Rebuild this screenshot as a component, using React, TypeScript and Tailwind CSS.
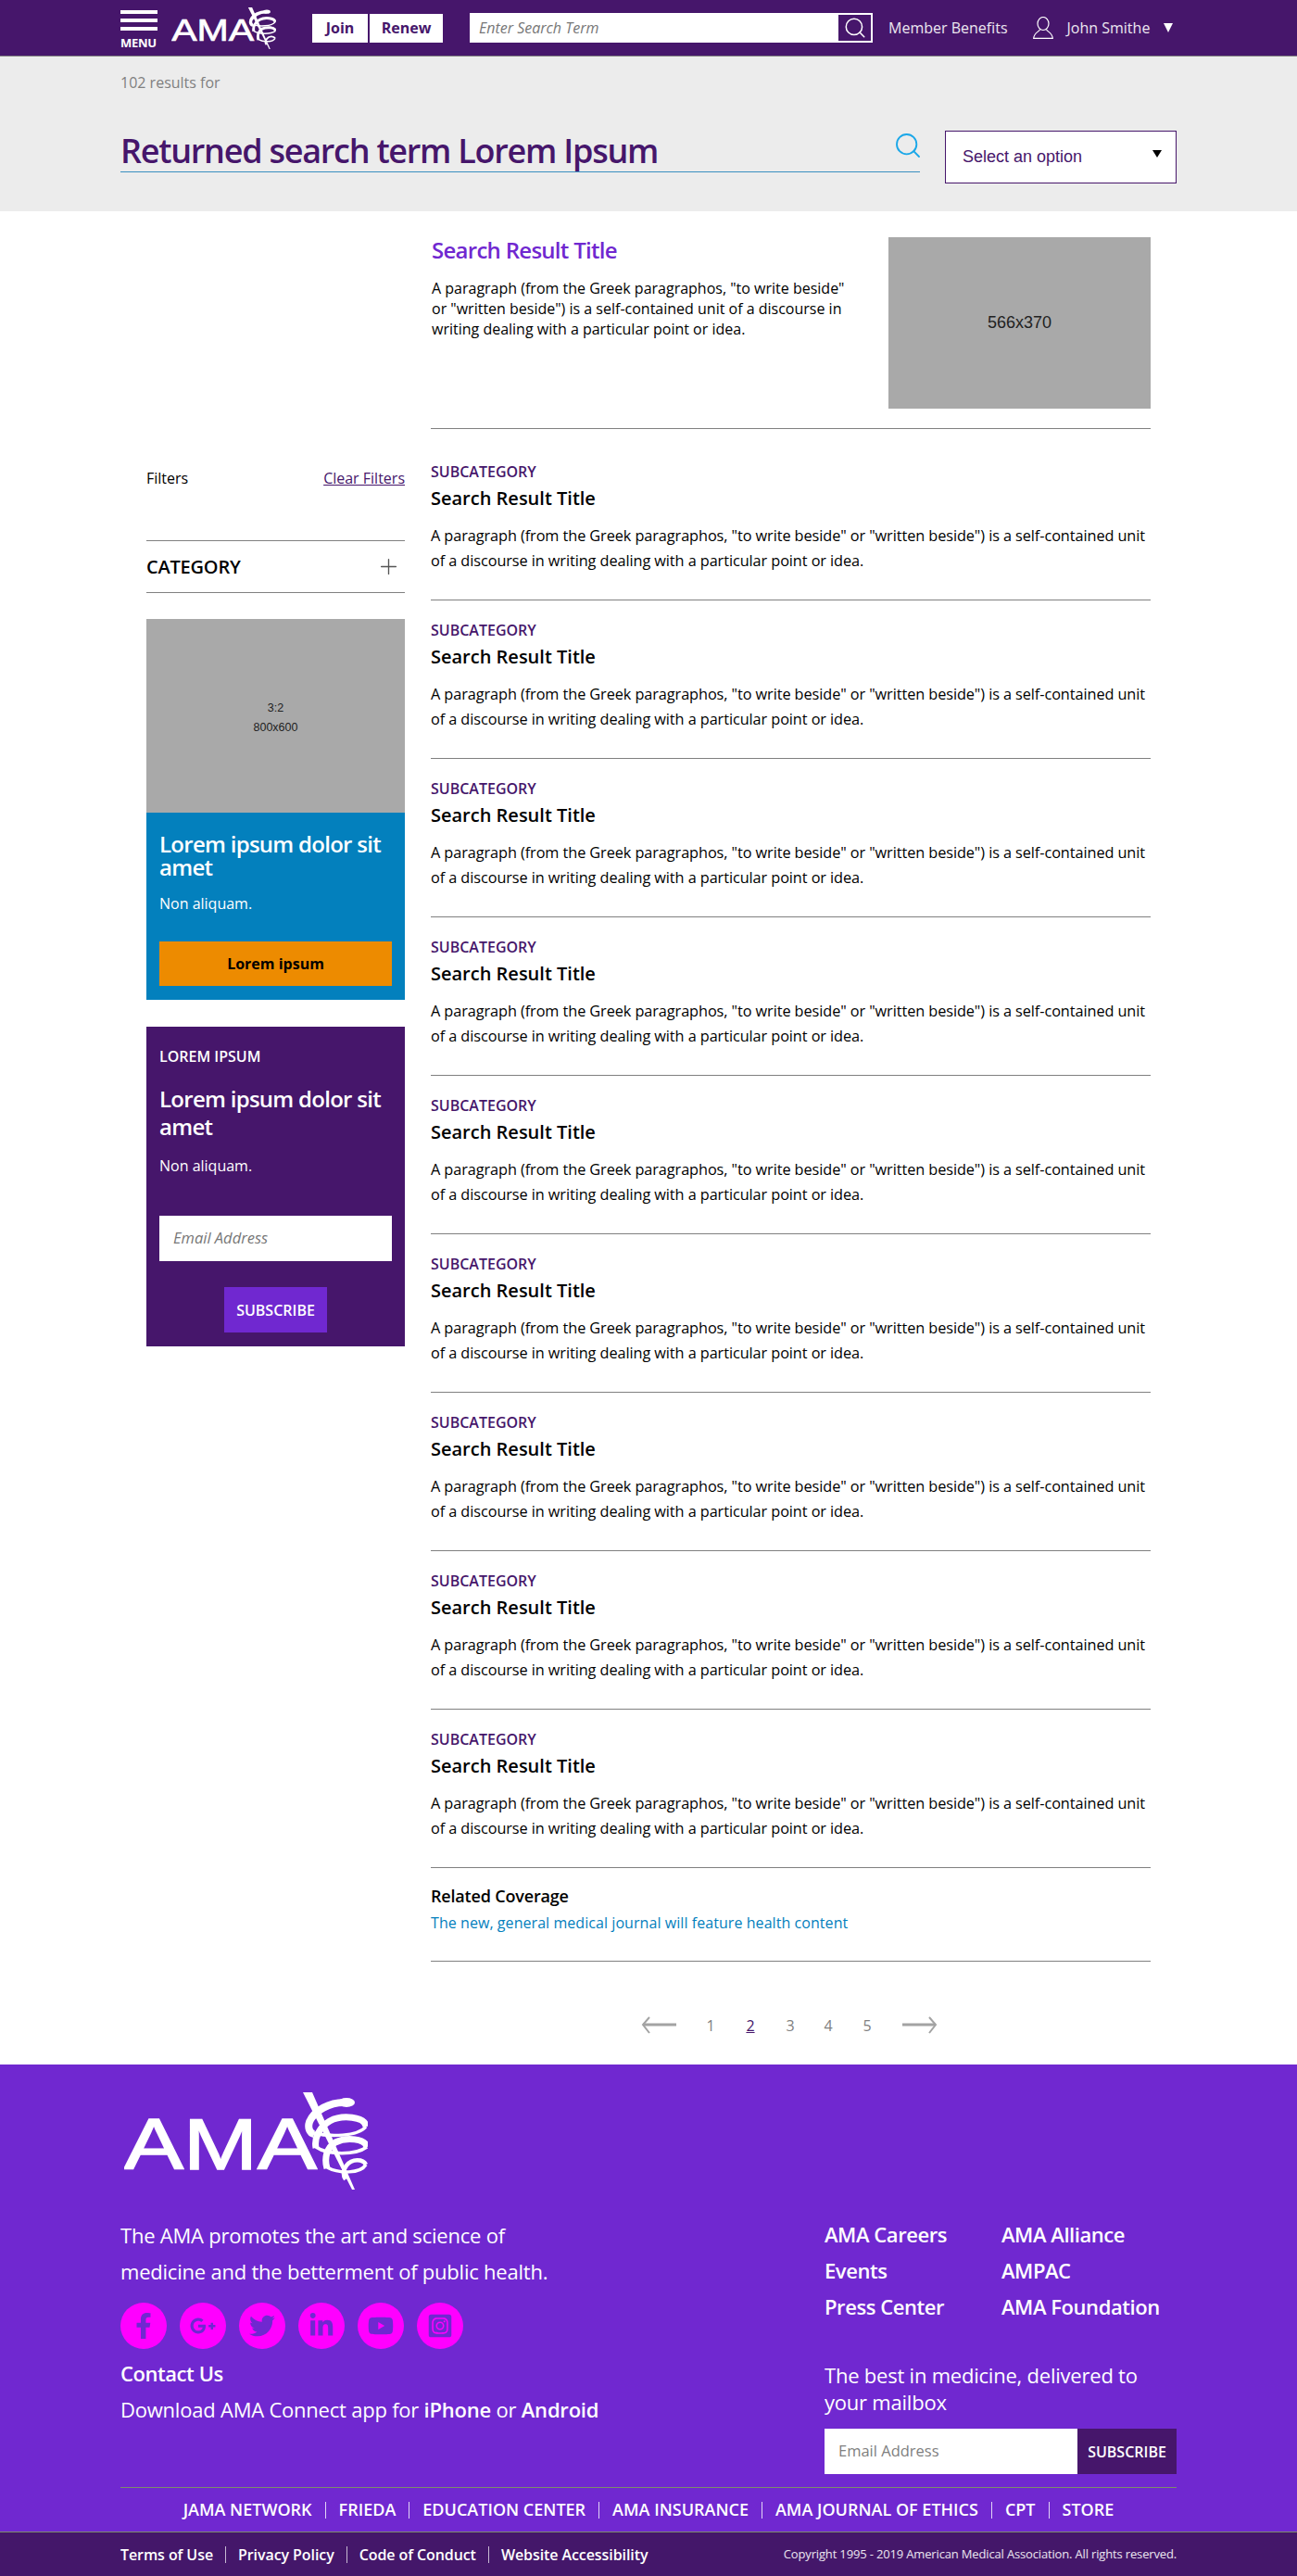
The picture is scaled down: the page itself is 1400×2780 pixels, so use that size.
import { Search, Plus } from 'lucide-react';
import { FaFacebookF, FaGooglePlusG, FaTwitter, FaLinkedinIn, FaYoutube, FaInstagramSquare } from 'react-icons/fa';

const results = [0, 1, 2, 3, 4, 5, 6, 7, 8];
const para = 'A paragraph (from the Greek paragraphos, "to write beside" or "written beside") is a self-contained unit of a discourse in writing dealing with a particular point or idea.';

const AmaLogo = ({ className }: { className: string }) => (
  <svg viewBox="0 0 263 105" className={className} fill="none">
    <text x="0" y="83" fill="#fff" stroke="#fff" strokeWidth="1.5" fontFamily="Liberation Sans, sans-serif" fontSize="78" textLength="208" lengthAdjust="spacingAndGlyphs">
      AMA
    </text>
    <path d="M193 0H203L249 105H246Z" fill="#fff" />
    <ellipse cx="240" cy="11" rx="9" ry="5" fill="#fff" />
    <path d="M240 11C222 10 205 20 200 32C198 38 200 44 205 45" stroke="#fff" strokeWidth="8" />
    <path d="M204 44C222 48 252 48 261 37" stroke="#fff" strokeWidth="3.5" />
    <path d="M261 37C260 26 235 24 222 31C210 38 205 50 207 60" stroke="#fff" strokeWidth="7" />
    <path d="M207 59C220 68 250 68 262 59" stroke="#fff" strokeWidth="3.5" />
    <path d="M262 59C260 50 240 48 228 54C218 60 216 72 219 82" stroke="#fff" strokeWidth="7" />
    <path d="M219 81C232 88 255 88 261 78" stroke="#fff" strokeWidth="3.5" />
    <path d="M261 78C258 72 246 71 240 79C236 84 236 90 239 94" stroke="#fff" strokeWidth="4.5" />
  </svg>
);

const Sep = () => <span className="w-px h-[18px] bg-white/80 mx-[14px]" />;
const SmallSep = () => <span className="w-px h-[18px] bg-white/70 mx-[13px]" />;

export default function App() {
  return (
    <div className="w-[1400px] h-[2780px] bg-white text-black overflow-hidden font-['Open_Sans',sans-serif]">
      <header className="h-[61px] bg-[#46166b] border-b border-[#808080] flex items-center pl-[130px] text-white">
        <div className="w-[40px] flex flex-col pt-[4px]">
          <div className="h-[4px] bg-white" />
          <div className="h-[4px] bg-white mt-[5px]" />
          <div className="h-[4px] bg-white mt-[5px]" />
          <div className="text-[13px] leading-[14px] font-bold mt-[6px] tracking-[-0.02em]">MENU</div>
        </div>
        <AmaLogo className="w-[113px] h-[45px] ml-[15px]" />
        <div className="ml-[39px] flex gap-[2px] text-[#46166b] text-[16px] font-bold">
          <div className="w-[60px] h-[31px] bg-white flex items-center justify-center">Join</div>
          <div className="w-[79px] h-[31px] bg-white flex items-center justify-center">Renew</div>
        </div>
        <div className="ml-[29px] w-[435px] h-[32px] bg-white flex items-center justify-between pl-[10px] pr-[2px]">
          <span className="italic text-[16px] text-[#777]">Enter Search Term</span>
          <span className="w-[35px] h-[28px] bg-[#46166b] flex items-center justify-center">
            <Search className="w-[26px] h-[26px] text-white" strokeWidth={1.4} />
          </span>
        </div>
        <span className="ml-[17px] text-[16px] text-white/90">Member Benefits</span>
        <svg className="ml-[27px]" width="22" height="24" viewBox="0 0 22 24" fill="none" stroke="#fff" strokeWidth="1.2">
          <ellipse cx="11" cy="7.5" rx="6" ry="7" />
          <path d="M7.5 13.5C7.5 16 1 17 .7 23.4H21.3C21 17 14.5 16 14.5 13.5" />
        </svg>
        <span className="ml-[15px] text-[16px] text-white/90">John Smithe</span>
        <span className="ml-[15px] w-0 h-0 border-x-[5px] border-x-transparent border-t-[10px] border-t-white" />
      </header>

      <section className="h-[167px] bg-[#ececec] pl-[130px] pr-[130px] pt-[16px]">
        <div className="text-[16px] leading-[24px] text-[#808080]">102 results for</div>
        <div className="flex mt-[40px]">
          <div className="w-[863px] h-[45px] border-b border-[#3b8fc0] flex justify-between items-start">
            <h1 className="text-[36px] leading-[43px] font-semibold tracking-[-0.035em] text-[#46166b]">Returned search term Lorem Ipsum</h1>
            <Search className="w-[32px] h-[32px] -mr-[3px] text-[#1aa7e8]" strokeWidth={1.4} />
          </div>
          <div className="ml-[27px] w-[250px] h-[57px] bg-white border border-[#46166b] flex items-center justify-between pl-[18px] pr-[15px] font-['Liberation_Sans',sans-serif] text-[18px] text-[#46166b]">
            Select an option
            <span className="w-0 h-0 border-x-[5px] border-x-transparent border-t-[8px] border-t-black -translate-y-[4px]" />
          </div>
        </div>
      </section>

      <main className="flex pl-[158px]">
        <aside className="w-[279px] pt-[272px]">
          <div className="flex justify-between text-[16px] leading-[32px]">
            <span>Filters</span>
            <a className="underline text-[#46166b]">Clear Filters</a>
          </div>
          <div className="mt-[51px] h-[57px] border-y border-[#808080] flex items-center justify-between pr-[4px]">
            <span className="text-[20px] font-semibold tracking-[-0.01em]">CATEGORY</span>
            <Plus className="w-[27px] h-[27px] text-[#555]" strokeWidth={1.2} />
          </div>
          <div className="mt-[28px] h-[209px] bg-[#a9a9a9] flex flex-col items-center justify-center font-['Liberation_Sans',sans-serif] text-[12.5px] leading-[21px] text-[#222] pt-[4px]">
            <div>3:2</div>
            <div>800x600</div>
          </div>
          <div className="h-[202px] bg-[#0380bd] px-[14px] pt-[21px] text-white">
            <div className="text-[24px] leading-[25px] font-semibold tracking-[-0.03em]">Lorem ipsum dolor sit amet</div>
            <div className="text-[16px] leading-[24px] mt-[15px]">Non aliquam.</div>
            <div className="mt-[29px] h-[48px] bg-[#ed8b00] text-black text-[16px] font-bold flex items-center justify-center">Lorem ipsum</div>
          </div>
          <div className="mt-[29px] h-[345px] bg-[#46166b] px-[14px] pt-[20px] text-white">
            <div className="text-[16px] leading-[24px] font-semibold">LOREM IPSUM</div>
            <div className="text-[24px] leading-[30px] font-semibold tracking-[-0.03em] mt-[19px]">Lorem ipsum dolor sit amet</div>
            <div className="text-[16px] leading-[24px] mt-[15px]">Non aliquam.</div>
            <div className="mt-[42px] h-[49px] bg-white text-[#777] italic text-[16.5px] flex items-center pl-[15px]">Email Address</div>
            <div className="mt-[28px] mx-auto w-[111px] h-[49px] bg-[#7028d0] text-[16px] font-semibold flex items-center justify-center">SUBSCRIBE</div>
          </div>
        </aside>

        <div className="ml-[28px] w-[777px] pt-[28px]">
          <div className="h-[207px] border-b border-[#808080] flex justify-between">
            <div className="w-[456px] pl-[1px]">
              <div className="text-[24px] leading-[28px] font-semibold tracking-[-0.03em] text-[#7028d0]">Search Result Title</div>
              <p className="text-[16px] leading-[22px] mt-[16px]">{para}</p>
            </div>
            <div className="w-[283px] h-[185px] bg-[#a9a9a9] flex items-center justify-center font-['Liberation_Sans',sans-serif] text-[18px] text-[#222]">566x370</div>
          </div>
          {results.map((i) => (
            <div key={i} className={i === 0 ? 'pt-[35px] pb-[28px] border-b border-[#808080]' : 'pt-[21px] pb-[28px] border-b border-[#808080]'}>
              <div className="text-[16px] leading-[22px] font-semibold text-[#46166b]">SUBCATEGORY</div>
              <div className="text-[20px] leading-[28px] font-semibold mt-[4px]">Search Result Title</div>
              <p className="max-w-[772px] text-[16.3px] leading-[27px] tracking-[-0.005em] mt-[13px]">{para}</p>
            </div>
          ))}
          <div className="pt-[18px] pb-[29px] border-b border-[#808080]">
            <div className="text-[18px] leading-[24px] font-semibold tracking-[-0.01em]">Related Coverage</div>
            <a className="block text-[16px] leading-[24px] tracking-[0.004em] mt-[5px] text-[#0380bd]">The new, general medical journal will feature health content</a>
          </div>
          <div className="flex items-center h-[30px] mt-[54px] mb-[27px] pl-[227px] text-[16px] text-[#808080]">
            <svg width="38" height="20" viewBox="0 0 38 20" fill="none" stroke="#a3a3a3" strokeWidth="3"><path d="M38 9H2" /><path d="M9 1L2 9L9 18" strokeWidth="2" /></svg>
            <span className="ml-[31px] w-[12px] text-center">1</span>
            <span className="ml-[31px] w-[12px] text-center underline text-[#46166b]">2</span>
            <span className="ml-[31px] w-[12px] text-center">3</span>
            <span className="ml-[29px] w-[12px] text-center">4</span>
            <span className="ml-[30px] w-[12px] text-center">5</span>
            <svg className="ml-[32px]" width="38" height="20" viewBox="0 0 38 20" fill="none" stroke="#a3a3a3" strokeWidth="3"><path d="M0 9H36" /><path d="M29 1L36 9L29 18" strokeWidth="2" /></svg>
          </div>
        </div>
      </main>

      <footer className="bg-[#7028d0] text-white">
        <div className="mx-[130px] flex justify-between pb-[14px] border-b border-[#7d8c6b]">
          <div className="pt-[30px]">
            <AmaLogo className="w-[263px] h-[105px] ml-[4px]" />
            <p className="mt-[30px] text-[22px] leading-[39px] tracking-[-0.01em] w-[600px]">The AMA promotes the art and science of<br />medicine and the betterment of public health.</p>
            <div className="flex gap-[14px] mt-[14px]">
              {[FaFacebookF, FaGooglePlusG, FaTwitter, FaLinkedinIn, FaYoutube, FaInstagramSquare].map((Icon, i) => (
                <span key={i} className="w-[50px] h-[50px] rounded-full bg-[#ff00ff] flex items-center justify-center text-[#7028d0]">
                  <Icon className="w-[28px] h-[28px]" />
                </span>
              ))}
            </div>
            <div className="mt-[7px] text-[22px] leading-[39px] font-semibold tracking-[-0.02em]">Contact Us</div>
            <div className="text-[22px] leading-[39px] tracking-[-0.01em]">Download AMA Connect app for <b className="font-semibold">iPhone</b> or <b className="font-semibold">Android</b></div>
          </div>
          <div className="w-[380px] pt-[164px]">
            <div className="grid grid-cols-[191px_1fr] text-[22px] leading-[39px] font-semibold tracking-[-0.02em]">
              <a>AMA Careers</a><a>AMA Alliance</a>
              <a>Events</a><a>AMPAC</a>
              <a>Press Center</a><a>AMA Foundation</a>
            </div>
            <div className="mt-[40px] text-[22px] leading-[29px] tracking-[-0.01em]">The best in medicine, delivered to your mailbox</div>
            <div className="mt-[14px] flex h-[49px]">
              <div className="w-[273px] bg-white text-[#808080] text-[16.5px] flex items-center pl-[15px]">Email Address</div>
              <div className="w-[107px] bg-[#46166b] text-[16px] font-semibold flex items-center justify-center">SUBSCRIBE</div>
            </div>
          </div>
        </div>
        <div className="h-[47px] flex items-center justify-center text-[18px] font-semibold">
          <span>JAMA NETWORK</span><Sep /><span>FRIEDA</span><Sep /><span>EDUCATION CENTER</span><Sep /><span>AMA INSURANCE</span><Sep /><span>AMA JOURNAL OF ETHICS</span><Sep /><span>CPT</span><Sep /><span>STORE</span>
        </div>
        <div className="h-[48px] bg-[#44176a] border-t border-[#7d8c6b] px-[130px] flex items-center justify-between">
          <div className="flex items-center text-[16px] font-semibold tracking-[-0.005em]">
            <span>Terms of Use</span><SmallSep /><span>Privacy Policy</span><SmallSep /><span>Code of Conduct</span><SmallSep /><span>Website Accessibility</span>
          </div>
          <div className="text-[13px] tracking-[-0.012em] text-white/90">Copyright 1995 - 2019 American Medical Association. All rights reserved.</div>
        </div>
      </footer>
    </div>
  );
}
